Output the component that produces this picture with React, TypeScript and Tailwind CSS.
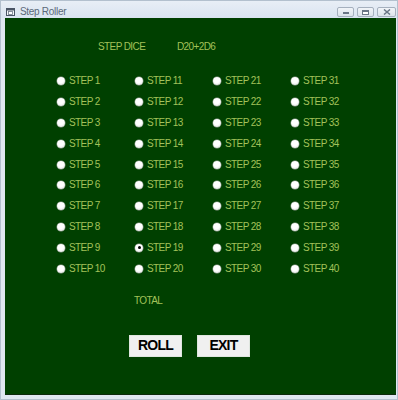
import React from "react";

const font = { fontFamily: '"Liberation Sans", Arial, sans-serif' };

function Radio({ checked }: { checked?: boolean }) {
  return (
    <span className="flex h-[8px] w-[8px] shrink-0 items-center justify-center rounded-full bg-[radial-gradient(circle_at_45%_35%,#ffffff_45%,#cfd2cf_100%)] shadow-[0_0_0_0.5px_#8f9a8f]">
      {checked && <span className="h-[3px] w-[3px] rounded-full bg-black" />}
    </span>
  );
}

export default function App() {
  const cols = [0, 1, 2, 3];
  const rows = Array.from({ length: 10 }, (_, i) => i);
  return (
    <div
      className="flex h-[400px] w-[398px] flex-col overflow-hidden border border-[#b3c0ce] bg-[#dfe7f1]"
      style={font}
    >
      {/* title bar */}
      <div className="flex h-[17px] shrink-0 items-start bg-[linear-gradient(#e8eef6,#dae4f0)]">
        <div className="flex items-center pl-[5px] pt-[5px]">
          <svg width="9" height="8" viewBox="0 0 9 8" className="mr-[5px]">
            <rect x="0.5" y="0.5" width="8" height="7" fill="#f4f6f8" stroke="#4a5565" />
            <rect x="0.5" y="0.5" width="8" height="2" fill="#4a5565" />
            <rect x="2.5" y="3.5" width="4" height="3" fill="#ffffff" stroke="#6b7585" strokeWidth="0.8" />
          </svg>
          <span className="text-[10px] leading-[11px] tracking-[-0.3px] text-[#5b6878]">Step Roller</span>
        </div>
        <div className="ml-auto flex gap-[3px] pr-[1px] pt-[6px]">
          <div className="flex h-[10px] w-[17px] items-end justify-center rounded-[2px] border border-[#a5b0be] bg-[linear-gradient(#f1f4f8,#dce3eb)] pb-[2px]">
            <span className="h-[2px] w-[6px] border border-[#6a7686] bg-white" />
          </div>
          <div className="flex h-[10px] w-[17px] items-center justify-center rounded-[2px] border border-[#a5b0be] bg-[linear-gradient(#f1f4f8,#dce3eb)]">
            <span className="h-[5px] w-[7px] border border-[#6a7686] border-t-2 bg-white" />
          </div>
          <div className="flex h-[10px] w-[19px] items-center justify-center rounded-[2px] border border-[#a5b0be] bg-[linear-gradient(#f1f4f8,#dce3eb)]">
            <svg width="8" height="6" viewBox="0 0 8 6">
              <path d="M1 0.5 L7 5.5 M7 0.5 L1 5.5" stroke="#6a7686" strokeWidth="1.5" />
            </svg>
          </div>
        </div>
      </div>

      {/* client area */}
      <div className="ml-[4px] h-[377px] w-[391px] shrink-0 border-b border-[#0c2a0c] bg-[#004000] text-[#a3c25a]">
        <div className="flex pl-[93px] pt-[23px] text-[10px] leading-[12px] tracking-[-0.6px]">
          <span className="w-[79px]">STEP DICE</span>
          <span>D20+2D6</span>
        </div>

        <div className="mt-[18px] grid grid-cols-[78px_78px_78px_78px] pl-[52px]">
          {cols.map((c) => (
            <div key={c} className="flex flex-col">
              {rows.map((r) => {
                const n = c * 10 + r + 1;
                return (
                  <div key={r} className="flex h-[20.8px] items-center">
                    <Radio checked={n === 19} />
                    <span className="ml-[4px] text-[10px] leading-[12px] tracking-[-0.6px]">
                      STEP {n}
                    </span>
                  </div>
                );
              })}
            </div>
          ))}
        </div>

        <div className="mt-[16px] pl-[129px] text-[10px] leading-[12px] tracking-[-0.6px]">TOTAL</div>

        <div className="mt-[28px] flex gap-[15px] pl-[124px]">
          <div className="flex h-[22px] w-[53px] items-center justify-center border border-[#dfe6df] bg-[#f0f0f0] text-[14px] font-bold tracking-[-0.8px] text-black">
            ROLL
          </div>
          <div className="flex h-[22px] w-[53px] items-center justify-center border border-[#dfe6df] bg-[#f0f0f0] text-[14px] font-bold tracking-[-0.8px] text-black">
            EXIT
          </div>
        </div>
      </div>
    </div>
  );
}
